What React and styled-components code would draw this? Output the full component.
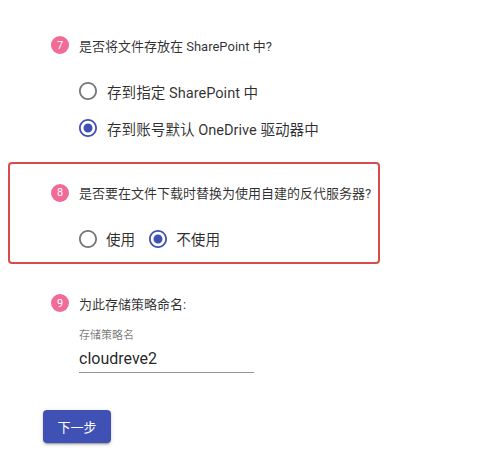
import React from "react";
import styled, { createGlobalStyle } from "styled-components";

const GlobalStyle = createGlobalStyle`
  body {
    margin: 0;
    background: #fff;
    font-family: Roboto, "Noto Sans CJK SC", sans-serif;
    color: rgba(0, 0, 0, 0.87);
  }
`;

const steps = [
  {
    no: 7,
    title: "是否将文件存放在 SharePoint 中?",
    inline: false,
    options: ["存到指定 SharePoint 中", "存到账号默认 OneDrive 驱动器中"],
    checked: 1,
  },
  {
    no: 8,
    title: "是否要在文件下载时替换为使用自建的反代服务器?",
    inline: true,
    highlight: true,
    options: ["使用", "不使用"],
    checked: 1,
  },
];

const RadioIcon = ({ checked }) => (
  <RadioSvg viewBox="2 2 20 20" $checked={checked}>
    <path d="M12 2C6.48 2 2 6.48 2 12s4.48 10 10 10 10-4.48 10-10S17.52 2 12 2zm0 18c-4.42 0-8-3.58-8-8s3.58-8 8-8 8 3.58 8 8-3.58 8-8 8z" />
    {checked && <path d="M12 7c-2.76 0-5 2.24-5 5s2.24 5 5 5 5-2.24 5-5-2.24-5-5-5z" />}
  </RadioSvg>
);

const App = () => {
  return (
    <Page>
      <GlobalStyle />
      {steps.map((s) => (
        <Step key={s.no} $highlight={s.highlight}>
          <Question>
            <Badge>{s.no}</Badge>
            <span>{s.title}</span>
          </Question>
          <Options $inline={s.inline}>
            {s.options.map((o, i) => (
              <Option key={o} $inline={s.inline}>
                <RadioIcon checked={i === s.checked} />
                <span>{o}</span>
              </Option>
            ))}
          </Options>
        </Step>
      ))}
      <Step>
        <Question>
          <Badge>9</Badge>
          <span>为此存储策略命名:</span>
        </Question>
        <Field>
          <FieldLabel>存储策略名</FieldLabel>
          <FieldInput defaultValue="cloudreve2" />
        </Field>
      </Step>
      <Actions>
        <Button>下一步</Button>
      </Actions>
    </Page>
  );
};

const Page = styled.div`
  padding: 14px 0 20px 8px;
`;

const Step = styled.div`
  box-sizing: border-box;
  width: 372px;
  border: 2.5px solid ${(p) => (p.$highlight ? "#d94b4b" : "transparent")};
  border-radius: 4px;
  padding: 19px 0 4.5px 41px;
  margin-bottom: 8.5px;
`;

const Question = styled.div`
  display: flex;
  align-items: center;
  gap: 10px;
  height: 20px;
  font-size: 13px;
  color: rgba(0, 0, 0, 0.82);
`;

const Badge = styled.span`
  width: 18px;
  height: 18px;
  border-radius: 50%;
  background: #f06b96;
  color: #fff;
  font-size: 11px;
  display: flex;
  align-items: center;
  justify-content: center;
`;

const Options = styled.div`
  display: flex;
  flex-direction: ${(p) => (p.$inline ? "row" : "column")};
  gap: ${(p) => (p.$inline ? "14px" : "0")};
  margin: 17.5px 0 0 28px;
`;

const Option = styled.label`
  display: flex;
  align-items: center;
  gap: ${(p) => (p.$inline ? "9px" : "10px")};
  height: 37px;
  font-size: 14.6px;
  color: rgba(0, 0, 0, 0.82);
`;

const RadioSvg = styled.svg`
  width: 18px;
  height: 18px;
  fill: ${(p) => (p.$checked ? "#3f51b5" : "rgba(0, 0, 0, 0.54)")};
`;

const Field = styled.div`
  display: flex;
  flex-direction: column;
  width: 175px;
  margin: 16px 0 0 28px;
`;

const FieldLabel = styled.label`
  font-size: 11px;
  line-height: 14px;
  color: rgba(0, 0, 0, 0.54);
`;

const FieldInput = styled.input`
  margin-top: 4px;
  border: none;
  border-bottom: 1px solid rgba(0, 0, 0, 0.42);
  padding: 0 0 3px;
  height: 22px;
  font-family: Roboto, "Noto Sans CJK SC", sans-serif;
  font-size: 16px;
  color: rgba(0, 0, 0, 0.87);
  outline: none;
  background: transparent;
`;

const Actions = styled.div`
  display: flex;
  margin: 30px 0 0 35px;
`;

const Button = styled.button`
  width: 68px;
  height: 33px;
  border: none;
  border-radius: 4px;
  background: #3f51b5;
  color: #fff;
  font-family: Roboto, "Noto Sans CJK SC", sans-serif;
  font-size: 13px;
  box-shadow: 0 3px 1px -2px rgba(0, 0, 0, 0.2), 0 2px 2px 0 rgba(0, 0, 0, 0.14),
    0 1px 5px 0 rgba(0, 0, 0, 0.12);
  cursor: pointer;
`;

export default App;
